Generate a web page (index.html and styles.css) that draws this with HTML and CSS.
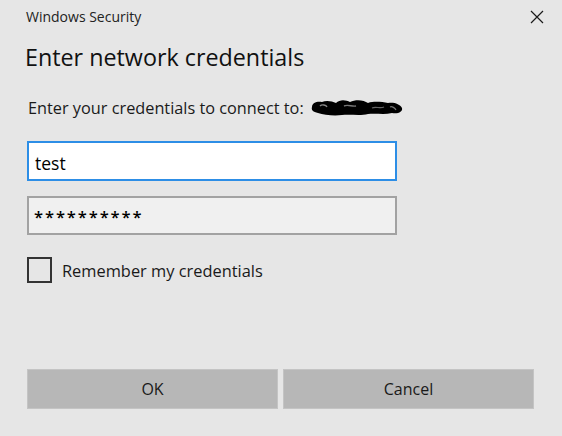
FILE: index.html
```html
<!DOCTYPE html>
<html>
<head>
<meta charset="utf-8">
<link rel="stylesheet" href="styles.css">
</head>
<body>
<div class="dialog">
  <div class="titlebar">
    <span class="title">Windows Security</span>
    <svg class="close" width="14" height="14" viewBox="0 0 14 14"><path d="M1 1 L13 13 M13 1 L1 13" stroke="#1a1a1a" stroke-width="1.2" fill="none"/></svg>
  </div>
  <h1 class="heading">Enter network credentials</h1>
  <div class="label">Enter your credentials to connect to:
    <svg class="redact" width="96" height="20" viewBox="0 0 94 20"><path d="M2 9 C2 4 8 3 12 4 C16 2 22 3 26 5 C30 1 36 2 40 4 C46 1 54 2 58 5 C64 3 72 4 78 5 C84 4 90 6 92 10 C93 14 88 16 82 15 C74 17 66 15 58 16 C50 18 40 16 32 17 C24 18 14 17 8 15 C3 14 1 12 2 9 Z" fill="#000"/><path d="M10 8 C12 6 16 7 17 9" stroke="#888" stroke-width="1.4" fill="none"/><path d="M34 8 C38 6 42 9 46 8" stroke="#777" stroke-width="1.4" fill="none"/><path d="M62 10 C66 8 70 11 74 9" stroke="#666" stroke-width="1.2" fill="none"/><path d="M80 9 C82 8 85 10 86 12" stroke="#777" stroke-width="1.2" fill="none"/></svg>
  </div>
  <div class="field field-active"><span class="value">test</span></div>
  <div class="field field-pass"><span class="stars">**********</span></div>
  <div class="check-row">
    <span class="checkbox"></span>
    <span class="check-label">Remember my credentials</span>
  </div>
  <div class="buttons">
    <div class="btn">OK</div>
    <div class="btn">Cancel</div>
  </div>
</div>
</body>
</html>
```
FILE: styles.css
```css
html, body {
  margin: 0;
  padding: 0;
  background: #e6e6e6;
}
.dialog {
  width: 562px;
  height: 436px;
  display: flex;
  flex-direction: column;
  font-family: "Open Sans", "Noto Sans", sans-serif;
  color: #1a1a1a;
  box-sizing: border-box;
}
.titlebar {
  height: 34px;
  display: flex;
  align-items: center;
  justify-content: space-between;
  padding: 0 18px 0 26px;
}
.title {
  font-size: 14px;
  line-height: 20px;
  color: #222;
}
.close {
  display: block;
}
.heading {
  margin: 8px 0 0 25px;
  font-size: 23.3px;
  line-height: 30px;
  font-weight: 400;
  color: #111;
}
.label {
  margin: 26px 0 0 28px;
  font-size: 16.3px;
  line-height: 20px;
  display: flex;
  align-items: center;
  gap: 5px;
  color: #1a1a1a;
}
.redact {
  display: block;
}
.field {
  margin-left: 27px;
  width: 370px;
  box-sizing: border-box;
  display: flex;
  align-items: center;
  padding-left: 6px;
}
.field-active {
  margin-top: 23px;
  height: 40px;
  background: #fff;
  border: 2px solid #2d8ee6;
}
.value {
  font-size: 17.5px;
  color: #000;
  padding-top: 3px;
}
.field-pass {
  margin-top: 15px;
  height: 39px;
  background: #f0f0f0;
  border: 2px solid #a2a2a2;
  padding-left: 5px;
}
.stars {
  font-size: 16.5px;
  color: #000;
  letter-spacing: 1.9px;
  padding-top: 2px;
  font-weight: 600;
}
.check-row {
  margin: 22px 0 0 27px;
  display: flex;
  align-items: center;
  gap: 10px;
  height: 26px;
}
.checkbox {
  width: 25px;
  height: 26px;
  box-sizing: border-box;
  border: 2px solid #333;
}
.check-label {
  font-size: 16.4px;
  color: #1a1a1a;
}
.buttons {
  margin: 86px 0 0 27px;
  display: flex;
  gap: 5px;
}
.btn {
  width: 251px;
  height: 40px;
  box-sizing: border-box;
  background: #b7b7b7;
  border: 1px solid #c4c4c4;
  display: flex;
  align-items: center;
  justify-content: center;
  font-size: 16px;
  color: #1a1a1a;
}
```
